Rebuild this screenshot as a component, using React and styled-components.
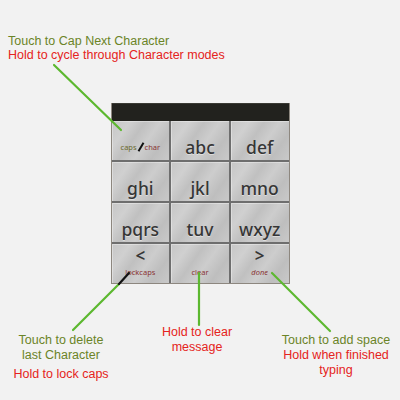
import React from 'react';
import styled, {createGlobalStyle} from 'styled-components';

const Global = createGlobalStyle`
    html, body {
        margin: 0;
        padding: 0;
        background: #f2f2f2;
    }
`

const Page = styled.div`
    position: relative;
    width: 400px;
    height: 400px;
    background: #f2f2f2;
    font-family: "Liberation Sans", Arial, sans-serif;
    display: flex;
    flex-direction: column;
    overflow: hidden;
`

const Note = styled.div`
    font-size: 12.5px;
    line-height: ${props => props.lh || 14}px;
    color: ${props => props.red ? '#e52320' : '#6b8427'};
    margin-top: ${props => props.gap || 0}px;
    white-space: nowrap;
`

const TopNotes = styled.div`
    padding: 34px 0 0 8px;
`

const Panel = styled.div`
    align-self: center;
    margin-top: 41px;
    width: 177px;
    border: 1px solid #8d877f;
    border-top: none;
    background: #6e6e6e;
`

const Bar = styled.div`
    height: 17px;
    background: #22221e;
    border-top: 1px solid #3a3a34;
`

const Grid = styled.div`
    display: grid;
    grid-template-columns: repeat(3, 1fr);
    grid-auto-rows: 39px;
    gap: 2px;
`

const Key = styled.div`
    display: flex;
    flex-direction: column;
    align-items: center;
    justify-content: ${props => props.top ? 'flex-start' : 'flex-end'};
    padding-bottom: ${props => props.top ? 0 : 2}px;
    background: linear-gradient(125deg, #c6c6c6 0%, #d0d0d0 22%, #c0c0c0 40%, #cdcdcd 58%, #bebebe 78%, #c9c9c9 100%);
    box-shadow: inset 1px 1px 0 rgba(255,255,255,0.35);
    font-family: "Noto Sans", "DejaVu Sans", sans-serif;
    color: #363636;
`

const Letters = styled.span`
    font-size: 17.5px;
    font-weight: 500;
    line-height: 22px;
    text-shadow: 0 1px 0 rgba(255,255,255,0.45);
`

const Arrow = styled.span`
    font-size: 17px;
    font-weight: 600;
    line-height: 20px;
    margin-top: 2px;
`

const Small = styled.span`
    font-size: 7.5px;
    line-height: 9px;
    color: ${props => props.olive ? '#6b6a2c' : '#8a3434'};
    font-style: ${props => props.italic ? 'italic' : 'normal'};
    margin-top: ${props => props.mt || 0}px;
`

const CapsLabel = styled.div`
    display: flex;
    align-items: center;
    gap: 1px;
    margin-bottom: 6px;
`

const Slash = styled.span`
    display: inline-block;
    width: 2px;
    height: 10px;
    background: #111;
    transform: rotate(30deg);
    margin: 0 2px;
`

const BottomNotes = styled.div`
    display: flex;
    margin-top: 41px;
`

const NoteCol = styled.div`
    width: ${props => props.w}px;
    display: flex;
    flex-direction: column;
    align-items: center;
    text-align: center;
    margin-top: ${props => props.mt || 0}px;
`

const Lines = styled.svg`
    position: absolute;
    left: 0;
    top: 0;
    pointer-events: none;
`

const keys = ['abc', 'def', 'ghi', 'jkl', 'mno', 'pqrs', 'tuv', 'wxyz'];

export default function App() {
    return (
        <Page>
            <Global />
            <TopNotes>
                <Note>Touch to Cap Next Character</Note>
                <Note red>Hold to cycle through Character modes</Note>
            </TopNotes>

            <Panel>
                <Bar />
                <Grid>
                    <Key>
                        <CapsLabel>
                            <Small olive>caps</Small>
                            <Slash />
                            <Small>char</Small>
                        </CapsLabel>
                    </Key>
                    {keys.map(k => (
                        <Key key={k}><Letters>{k}</Letters></Key>
                    ))}
                    <Key top>
                        <Arrow>&lt;</Arrow>
                        <Small mt={2}>lockcaps</Small>
                    </Key>
                    <Key top>
                        <Arrow>&nbsp;</Arrow>
                        <Small mt={2}>clear</Small>
                    </Key>
                    <Key top>
                        <Arrow>&gt;</Arrow>
                        <Small mt={2} italic>done</Small>
                    </Key>
                </Grid>
            </Panel>

            <BottomNotes>
                <NoteCol w={122} mt={8}>
                    <Note lh={15}>Touch to delete</Note>
                    <Note lh={15}>last Character</Note>
                    <Note red lh={15} gap={4}>Hold to lock caps</Note>
                </NoteCol>
                <NoteCol w={150}>
                    <Note red lh={15}>Hold to clear</Note>
                    <Note red lh={15}>message</Note>
                </NoteCol>
                <NoteCol w={128} mt={8}>
                    <Note lh={15}>Touch to add space</Note>
                    <Note red lh={15}>Hold when finished</Note>
                    <Note red lh={15}>typing</Note>
                </NoteCol>
            </BottomNotes>

            <Lines width="400" height="400" viewBox="0 0 400 400">
                <g stroke="#5cb82f" strokeWidth="2.2" strokeLinecap="round">
                    <line x1="54" y1="65" x2="121" y2="130" />
                    <line x1="119" y1="284" x2="73" y2="330" />
                    <line x1="199" y1="273" x2="199" y2="325" />
                    <line x1="272" y1="273" x2="330" y2="331" />
                </g>
                <line x1="129" y1="273" x2="119" y2="284" stroke="#111" strokeWidth="2.2" strokeLinecap="round" />
            </Lines>
        </Page>
    );
}
